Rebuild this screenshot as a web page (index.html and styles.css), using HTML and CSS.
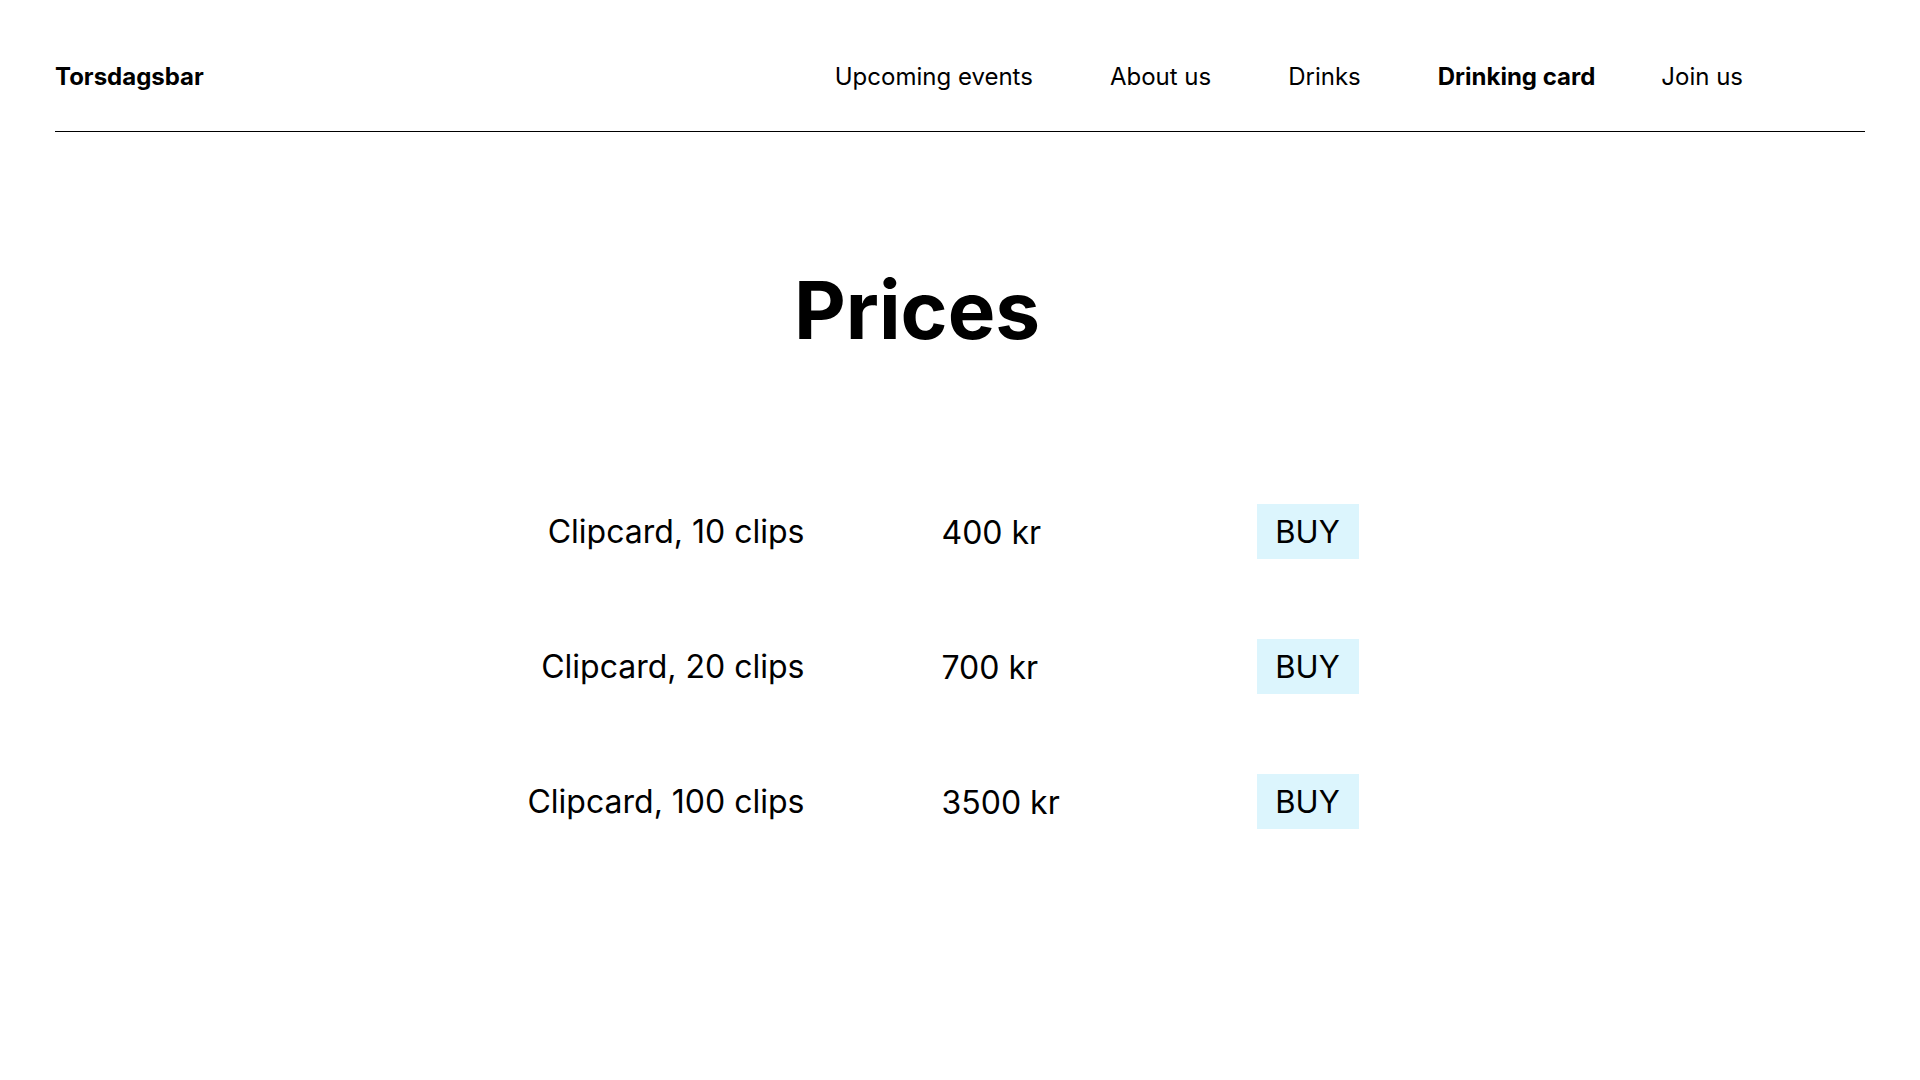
FILE: index.html
```html
<!DOCTYPE html>
<html lang="en">
<head>
<meta charset="utf-8">
<title>Torsdagsbar – Drinking card</title>
<link rel="stylesheet" href="styles.css">
</head>
<body>
<header class="site-header">
  <div class="header-inner">
    <a class="logo" href="#">Torsdagsbar</a>
    <nav class="nav">
      <a class="nav-link" href="#">Upcoming events</a>
      <a class="nav-link" href="#">About us</a>
      <a class="nav-link" href="#">Drinks</a>
      <a class="nav-link active" href="#">Drinking card</a>
      <a class="nav-link last" href="#">Join us</a>
    </nav>
  </div>
</header>
<main class="main">
  <h1 class="title">Prices</h1>
  <div class="prices">
    <div class="label">Clipcard, 10 clips</div>
    <div class="price">400 kr</div>
    <button class="buy">BUY</button>

    <div class="label">Clipcard, 20 clips</div>
    <div class="price">700 kr</div>
    <button class="buy">BUY</button>

    <div class="label">Clipcard, 100 clips</div>
    <div class="price">3500 kr</div>
    <button class="buy">BUY</button>
  </div>
</main>
</body>
</html>
```
FILE: styles.css
```css
* { box-sizing: border-box; }
html, body {
  margin: 0;
  padding: 0;
  background: #ffffff;
  color: #000000;
  font-family: Inter, "Noto Sans", sans-serif;
}
.site-header {
  padding: 0 55px;
}
.header-inner {
  display: flex;
  align-items: center;
  justify-content: space-between;
  padding-top: 62px;
  padding-bottom: 40px;
  border-bottom: 1px solid #000;
}
.logo {
  font-size: 24px;
  font-weight: 700;
  color: #000;
  text-decoration: none;
  line-height: 29px;
}
.nav {
  display: flex;
  align-items: center;
  padding-right: 122px;
}
.nav-link {
  font-size: 24px;
  font-weight: 400;
  color: #000;
  text-decoration: none;
  line-height: 29px;
  margin-left: 77px;
}
.nav-link:first-child { margin-left: 0; }
.nav-link.active { font-weight: 700; }
.nav-link.last { margin-left: 66px; }

.main {
  padding: 0 141px 0 55px;
  display: flex;
  flex-direction: column;
  align-items: center;
}
.title {
  margin: 130px 0 0;
  font-size: 80px;
  font-weight: 700;
  line-height: 96px;
}
.prices {
  margin-top: 146px;
  display: grid;
  grid-template-columns: 329px 178px 102px;
  column-gap: 137px;
  row-gap: 80px;
  align-items: center;
}
.label {
  font-size: 32px;
  text-align: right;
  line-height: 38px;
}
.price {
  font-size: 32px;
  line-height: 38px;
  padding-top: 3px;
}
.buy {
  font-family: Inter, "Noto Sans", sans-serif;
  font-size: 31px;
  line-height: 35px;
  padding: 10px 0;
  width: 102px;
  border: none;
  background: #dcf5fd;
  color: #000;
  text-align: center;
  cursor: pointer;
}
```
